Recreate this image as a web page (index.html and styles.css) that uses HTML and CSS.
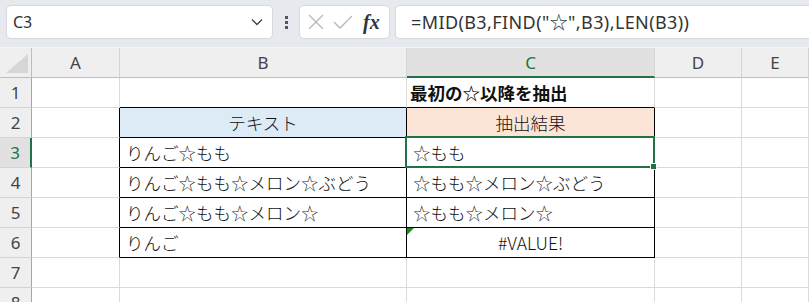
FILE: index.html
```html
<!DOCTYPE html>
<html lang="ja">
<head>
    <meta charset="UTF-8">
    <title>MID FIND</title>
    <link rel="stylesheet" href="styles.css">
</head>
<body>
    <div class="toolbar">
        <div class="namebox">
            <span class="ref">C3</span>
            <svg class="chevron" width="12" height="8" viewBox="0 0 12 8"><polyline points="1,1.5 6,6.5 11,1.5" fill="none" stroke="#444" stroke-width="1.3"/></svg>
        </div>
        <div class="grip"><i></i><i></i><i></i></div>
        <div class="fxbox">
            <svg width="18" height="18" viewBox="0 0 18 18"><path d="M2 2 L16 16 M16 2 L2 16" stroke="#b8b8b8" stroke-width="1.4" fill="none"/></svg>
            <svg width="20" height="16" viewBox="0 0 20 16"><polyline points="1,8 7,14 19,2" stroke="#b8b8b8" stroke-width="1.4" fill="none"/></svg>
            <span class="fx">fx</span>
        </div>
        <div class="formula">=MID(B3,FIND("☆",B3),LEN(B3))</div>
    </div>

    <div class="sheet">
        <div class="corner"></div>
        <div class="colhead">A</div>
        <div class="colhead">B</div>
        <div class="colhead active">C</div>
        <div class="colhead">D</div>
        <div class="colhead">E</div>

        <div class="rowhead">1</div>
        <div class="cell"></div>
        <div class="cell tb"></div>
        <div class="cell tb bold">最初の☆以降を抽出</div>
        <div class="cell"></div>
        <div class="cell"></div>

        <div class="rowhead">2</div>
        <div class="cell tr"></div>
        <div class="cell t blue center">テキスト</div>
        <div class="cell t peach center">抽出結果</div>
        <div class="cell"></div>
        <div class="cell"></div>

        <div class="rowhead active">3</div>
        <div class="cell tr"></div>
        <div class="cell t">りんご☆もも</div>
        <div class="cell t selected">☆もも</div>
        <div class="cell"></div>
        <div class="cell"></div>

        <div class="rowhead">4</div>
        <div class="cell tr"></div>
        <div class="cell t">りんご☆もも☆メロン☆ぶどう</div>
        <div class="cell t">☆もも☆メロン☆ぶどう</div>
        <div class="cell"></div>
        <div class="cell"></div>

        <div class="rowhead">5</div>
        <div class="cell tr"></div>
        <div class="cell t">りんご☆もも☆メロン☆</div>
        <div class="cell t">☆もも☆メロン☆</div>
        <div class="cell"></div>
        <div class="cell"></div>

        <div class="rowhead">6</div>
        <div class="cell tr"></div>
        <div class="cell t">りんご</div>
        <div class="cell t center error">#VALUE!</div>
        <div class="cell"></div>
        <div class="cell"></div>

        <div class="rowhead">7</div>
        <div class="cell"></div>
        <div class="cell"></div>
        <div class="cell"></div>
        <div class="cell"></div>
        <div class="cell"></div>

        <div class="rowhead">8</div>
        <div class="cell"></div>
        <div class="cell"></div>
        <div class="cell"></div>
        <div class="cell"></div>
        <div class="cell"></div>
    </div>
</body>
</html>
```

FILE: styles.css
```css
body {
    margin: 0;
    background: #fff;
    font-family: "Noto Sans", "Noto Sans CJK JP", sans-serif;
    overflow: hidden;
}
.toolbar {
    height: 48px;
    background: #e6e9ee;
    border-bottom: 1px solid #f3f4f6;
    display: flex;
    align-items: flex-start;
    padding: 5px 0 0 6px;
    box-sizing: border-box;
}
.namebox {
    width: 267px;
    height: 34px;
    box-sizing: border-box;
    background: #fff;
    border: 1px solid #d6d8dc;
    border-radius: 5px;
    display: flex;
    align-items: center;
    justify-content: space-between;
    padding: 0 9px 0 6px;
}
.ref {
    font-size: 16px;
    color: #333;
}
.grip {
    width: 26px;
    height: 34px;
    display: flex;
    flex-direction: column;
    align-items: center;
    justify-content: center;
    gap: 2px;
}
.grip i {
    width: 3px;
    height: 3px;
    background: #555;
}
.fxbox {
    width: 91px;
    height: 34px;
    box-sizing: border-box;
    background: #fff;
    border: 1px solid #d6d8dc;
    border-radius: 5px;
    display: flex;
    align-items: center;
    gap: 8px;
    padding: 0 0 0 7px;
}
.fx {
    font-family: "Liberation Serif", serif;
    font-style: italic;
    font-weight: bold;
    font-size: 20px;
    color: #333;
    margin-left: 2px;
}
.formula {
    flex: 1;
    height: 34px;
    margin-left: 5px;
    box-sizing: border-box;
    background: #fff;
    border: 1px solid #d6d8dc;
    border-right: none;
    border-radius: 5px 0 0 5px;
    padding: 0 0 0 15px;
    line-height: 32px;
    font-size: 18px;
    letter-spacing: 0.4px;
    color: #333;
    white-space: nowrap;
}
.sheet {
    display: grid;
    grid-template-columns: 32px 88px 287px 248px 87px 1fr;
    grid-auto-rows: 30px;
}
.corner {
    background: #efefef;
    border-right: 1px solid #bdbdbd;
    border-bottom: 1px solid #bdbdbd;
    position: relative;
}
.corner::after {
    content: "";
    position: absolute;
    right: 3px;
    bottom: 4px;
    width: 0;
    height: 0;
    border-left: 22px solid transparent;
    border-bottom: 19px solid #d6d6d6;
}
.colhead {
    background: #efefef;
    border-right: 1px solid #d4d4d4;
    border-bottom: 1px solid #bdbdbd;
    color: #444;
    font-size: 17px;
    display: flex;
    align-items: center;
    justify-content: center;
}
.colhead.active {
    background: #e1e1e1;
    color: #217346;
    border-bottom: 2px solid #217346;
}
.rowhead {
    background: #efefef;
    border-right: 1px solid #a6a6a6;
    border-bottom: 1px solid #d4d4d4;
    color: #444;
    font-size: 17px;
    display: flex;
    align-items: center;
    justify-content: center;
}
.rowhead.active {
    background: #e1e1e1;
    color: #217346;
    border-right: 2px solid #217346;
}
.cell {
    border-right: 1px solid #dadada;
    border-bottom: 1px solid #dadada;
    font-family: "Noto Sans CJK JP", sans-serif;
    font-weight: 300;
    font-size: 17.5px;
    color: #111;
    padding: 0 6px;
    display: flex;
    align-items: center;
    white-space: nowrap;
    position: relative;
}
.cell.t {
    border-right-color: #000;
    border-bottom-color: #000;
}
.cell.tb {
    border-bottom-color: #000;
}
.cell.tr {
    border-right-color: #000;
}
.cell.bold {
    font-weight: bold;
    padding-left: 3px;
}
.center {
    justify-content: center;
}
.blue {
    background: #ddebf7;
}
.peach {
    background: #fce4d6;
}
.selected::after {
    content: "";
    position: absolute;
    top: -2px;
    left: -2px;
    right: -1px;
    bottom: -1px;
    border: 2px solid #217346;
}
.selected::before {
    content: "";
    position: absolute;
    right: -3px;
    bottom: -3px;
    width: 5px;
    height: 5px;
    background: #217346;
    border: 1px solid #fff;
    z-index: 2;
}
.error::before {
    content: "";
    position: absolute;
    top: 0;
    left: 0;
    border-top: 7px solid #1d8a1d;
    border-right: 7px solid transparent;
}
```
